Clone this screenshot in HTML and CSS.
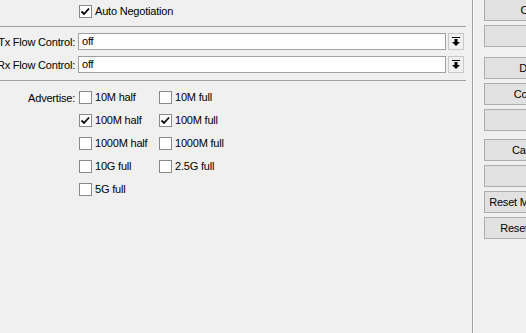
FILE: index.html
```html
<!DOCTYPE html>
<html>
<head>
<meta charset="utf-8">
<link rel="stylesheet" href="styles.css">
</head>
<body>
<div class="window">
  <div class="panel">
    <div class="row row-auto">
      <div class="label"></div>
      <div class="check"><span class="box"><svg width="13" height="13" viewBox="0 0 13 13"><polyline points="2.5,6.5 5,9 10,3.5" fill="none" stroke="#000" stroke-width="1.8"/></svg></span><span class="ctext">Auto Negotiation</span></div>
    </div>
    <div class="sep"></div>
    <div class="row row-field first">
      <div class="label">Tx Flow Control:</div>
      <div class="select">
        <div class="input">off</div>
        <div class="drop"><svg width="14" height="15" viewBox="0 0 14 15"><rect x="3" y="3" width="8" height="1" fill="#000"/><rect x="5.5" y="5" width="3" height="3" fill="#000"/><polygon points="3,8 11,8 7,12" fill="#000"/></svg></div>
      </div>
    </div>
    <div class="row row-field">
      <div class="label">Rx Flow Control:</div>
      <div class="select">
        <div class="input">off</div>
        <div class="drop"><svg width="14" height="15" viewBox="0 0 14 15"><rect x="3" y="3" width="8" height="1" fill="#000"/><rect x="5.5" y="5" width="3" height="3" fill="#000"/><polygon points="3,8 11,8 7,12" fill="#000"/></svg></div>
      </div>
    </div>
    <div class="sep sep2"></div>
    <div class="adv">
      <div class="label adv-label">Advertise:</div>
      <div class="grid">
        <div class="check"><span class="box"></span><span class="ctext">10M half</span></div>
        <div class="check"><span class="box"></span><span class="ctext">10M full</span></div>
        <div class="check"><span class="box"><svg width="13" height="13" viewBox="0 0 13 13"><polyline points="2.5,6.5 5,9 10,3.5" fill="none" stroke="#000" stroke-width="1.8"/></svg></span><span class="ctext">100M half</span></div>
        <div class="check"><span class="box"><svg width="13" height="13" viewBox="0 0 13 13"><polyline points="2.5,6.5 5,9 10,3.5" fill="none" stroke="#000" stroke-width="1.8"/></svg></span><span class="ctext">100M full</span></div>
        <div class="check"><span class="box"></span><span class="ctext">1000M half</span></div>
        <div class="check"><span class="box"></span><span class="ctext">1000M full</span></div>
        <div class="check"><span class="box"></span><span class="ctext">10G full</span></div>
        <div class="check"><span class="box"></span><span class="ctext">2.5G full</span></div>
        <div class="check"><span class="box"></span><span class="ctext">5G full</span></div>
      </div>
    </div>
  </div>
  <div class="divider"></div>
  <div class="buttons">
    <div class="group g1">
      <div class="btn">Cancel</div>
      <div class="btn"></div>
    </div>
    <div class="group g2">
      <div class="btn">Disable</div>
      <div class="btn">Comment</div>
      <div class="btn"></div>
    </div>
    <div class="group g3">
      <div class="btn">Cable Test</div>
      <div class="btn"></div>
      <div class="btn">Reset MAC Address</div>
      <div class="btn">Reset Counters</div>
    </div>
  </div>
</div>
</body>
</html>
```
FILE: styles.css
```css
html, body {
  margin: 0;
  padding: 0;
  background: #f0f0f0;
  overflow: hidden;
}
body {
  width: 526px;
  height: 333px;
  font-family: "Liberation Sans", Arial, sans-serif;
  font-size: 11px;
  letter-spacing: -0.2px;
  color: #000;
}
.window {
  display: flex;
  height: 333px;
}
.panel {
  width: 466px;
  flex: none;
}
.row {
  display: flex;
  align-items: center;
}
.label {
  width: 75px;
  flex: none;
  display: flex;
  justify-content: flex-end;
  white-space: nowrap;
  margin-right: 3px;
}
.row-auto {
  margin-top: 5px;
  height: 13px;
}
.check {
  display: flex;
  align-items: center;
  height: 13px;
  white-space: nowrap;
}
.box {
  width: 11px;
  height: 11px;
  border: 1px solid #8a8a8a;
  background: #fff;
  margin-left: 1px;
  margin-right: 3px;
  flex: none;
  position: relative;
}
.box svg {
  position: absolute;
  left: -1px;
  top: -1px;
}
.ctext {
  line-height: 13px;
}
.sep {
  height: 0;
  border-top: 1px solid #a0a0a0;
  margin-top: 8px;
}
.sep2 {
  margin-top: 7px;
}
.row-field {
  margin-top: 6px;
  height: 17px;
}
.select {
  display: flex;
  width: 386px;
  height: 17px;
}
.input {
  flex: 1;
  height: 15px;
  border: 1px solid #a0a0a0;
  background: #fff;
  line-height: 15px;
  padding-left: 3px;
}
.drop {
  width: 14px;
  height: 15px;
  margin-left: 2px;
  border: 1px solid #c8c8c8;
  background: #f0f0f0;
}
.drop svg {
  display: block;
}
.adv {
  display: flex;
  margin-top: 10px;
}
.adv-label {
  height: 13px;
  align-items: center;
}
.grid {
  display: grid;
  grid-template-columns: 80px 80px;
  row-gap: 10px;
}
.divider {
  width: 0;
  margin-left: 6px;
  border-left: 1px solid #a0a0a0;
  border-right: 1px solid #fff;
}
.buttons {
  margin-left: 10px;
  display: flex;
  flex-direction: column;
}
.group {
  display: flex;
  flex-direction: column;
  gap: 4px;
}
.g1 { margin-top: -1px; }
.g2 { margin-top: 10px; }
.g3 { margin-top: 8px; }
.btn {
  width: 104px;
  height: 20px;
  border: 1px solid #adadad;
  background: #e1e1e1;
  text-align: center;
  line-height: 20px;
  white-space: nowrap;
  flex: none;
}
```
